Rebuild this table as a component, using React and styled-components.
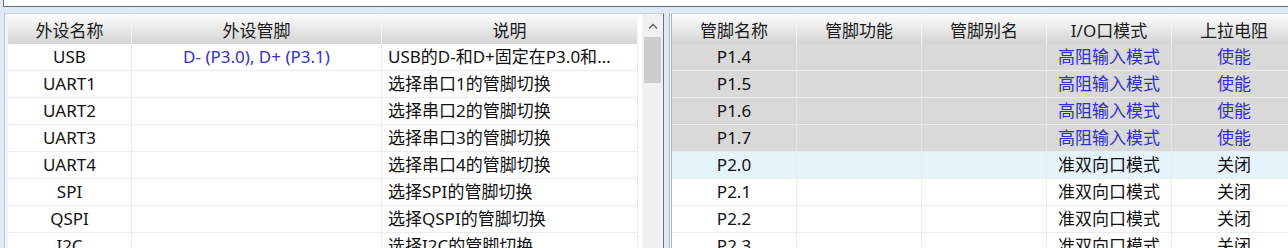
import styled, { createGlobalStyle } from "styled-components";

const GlobalStyle = createGlobalStyle`
  body {
    margin: 0;
    background: #dfe9f5;
    font-family: "Noto Sans", "Noto Sans CJK SC", sans-serif;
  }
`;

const peripherals = [
  { name: "USB", pins: "D- (P3.0), D+ (P3.1)", desc: "USB的D-和D+固定在P3.0和P3.1上，不可切换" },
  { name: "UART1", pins: "", desc: "选择串口1的管脚切换" },
  { name: "UART2", pins: "", desc: "选择串口2的管脚切换" },
  { name: "UART3", pins: "", desc: "选择串口3的管脚切换" },
  { name: "UART4", pins: "", desc: "选择串口4的管脚切换" },
  { name: "SPI", pins: "", desc: "选择SPI的管脚切换" },
  { name: "QSPI", pins: "", desc: "选择QSPI的管脚切换" },
  { name: "I2C", pins: "", desc: "选择I2C的管脚切换" },
];

const pins = [
  { name: "P1.4", mode: "高阻输入模式", pull: "使能", state: "locked" },
  { name: "P1.5", mode: "高阻输入模式", pull: "使能", state: "locked" },
  { name: "P1.6", mode: "高阻输入模式", pull: "使能", state: "locked" },
  { name: "P1.7", mode: "高阻输入模式", pull: "使能", state: "locked" },
  { name: "P2.0", mode: "准双向口模式", pull: "关闭", state: "hover" },
  { name: "P2.1", mode: "准双向口模式", pull: "关闭", state: "normal" },
  { name: "P2.2", mode: "准双向口模式", pull: "关闭", state: "normal" },
  { name: "P2.3", mode: "准双向口模式", pull: "关闭", state: "normal" },
];

function App() {
  return (
    <>
      <GlobalStyle />
      <Frame>
        <TopBox />
        <Panels>
          <LeftPanel>
            <Grid $cols="124px 250px 256px">
              <HeadCell>外设名称</HeadCell>
              <HeadCell>外设管脚</HeadCell>
              <HeadCell>说明</HeadCell>
              {peripherals.map((p) => (
                <Row key={p.name}>
                  <Cell>{p.name}</Cell>
                  <Cell $blue>{p.pins}</Cell>
                  <Cell $left>{p.desc}</Cell>
                </Row>
              ))}
            </Grid>
            <Gap />
            <ScrollBar>
              <ArrowUp>
                <svg width="10" height="6" viewBox="0 0 10 6">
                  <path d="M1 5.5 L5 1.5 L9 5.5" fill="none" stroke="#606060" strokeWidth="1.4" />
                </svg>
              </ArrowUp>
              <Thumb />
            </ScrollBar>
          </LeftPanel>
          <RightPanel>
            <Grid $cols="125px 125px 125px 125px 125px">
              <HeadCell>管脚名称</HeadCell>
              <HeadCell>管脚功能</HeadCell>
              <HeadCell>管脚别名</HeadCell>
              <HeadCell>I/O口模式</HeadCell>
              <HeadCell>上拉电阻</HeadCell>
              {pins.map((p) => (
                <Row key={p.name} $state={p.state}>
                  <Cell>{p.name}</Cell>
                  <Cell />
                  <Cell />
                  <Cell $blue={p.state === "locked"}>{p.mode}</Cell>
                  <Cell $blue={p.state === "locked"}>{p.pull}</Cell>
                </Row>
              ))}
            </Grid>
          </RightPanel>
        </Panels>
      </Frame>
    </>
  );
}

const Frame = styled.div`
  width: 1288px;
  height: 248px;
  overflow: hidden;
  background: #dfe9f5;
`;

const TopBox = styled.div`
  margin-left: 3px;
  height: 6px;
  background: #ffffff;
  border-left: 1px solid #6b6b6b;
  border-bottom: 1px solid #6b6b6b;
  margin-bottom: 6px;
`;

const Panels = styled.div`
  display: flex;
  padding-left: 4px;
  height: 235px;
`;

const LeftPanel = styled.div`
  box-sizing: border-box;
  display: flex;
  width: 660px;
  flex-shrink: 0;
  border-top: 1px solid #c7d6e6;
  border-left: 1px solid #afc5dc;
  border-right: 1px solid #707070;
  padding-left: 3px;
  background: #ffffff;
  box-shadow: inset 3px 0 0 #eef4fa;
`;

const RightPanel = styled.div`
  flex: 1;
  margin-left: 5px;
  border-top: 1px solid #c7d6e6;
  border-left: 3px double #9fb5cd;
  background: #ffffff;
  overflow: hidden;
`;

const Grid = styled.div`
  display: grid;
  grid-template-columns: ${(p) => p.$cols};
  grid-auto-rows: 27px;
  grid-template-rows: 30px;
  align-content: start;
  flex-shrink: 0;
`;

const HeadCell = styled.div`
  display: flex;
  align-items: center;
  justify-content: center;
  background: linear-gradient(#fdfdfd, #d4d4d4);
  border-right: 1px solid #f4f4f4;
  font-size: 17px;
  color: #1a1a1a;
  white-space: nowrap;
`;

const rowBg = {
  locked: "#d9d9d9",
  hover: "#e5f3fb",
  normal: "#ffffff",
};

const Row = styled.div`
  display: contents;
  & > div {
    background: ${(p) => rowBg[p.$state || "normal"]};
    border-bottom: 1px solid ${(p) => (p.$state === "locked" ? "#ececec" : "#e9edf1")};
    border-right: 1px solid ${(p) => (p.$state === "locked" ? "#e6e6e6" : "#ececec")};
  }
`;

const Cell = styled.div`
  box-sizing: border-box;
  height: 27px;
  line-height: 26px;
  text-align: ${(p) => (p.$left ? "left" : "center")};
  padding: ${(p) => (p.$left ? "0 18px 0 6px" : "0")};
  font-size: 17px;
  color: ${(p) => (p.$blue ? "#3030c8" : "#111111")};
  white-space: nowrap;
  overflow: hidden;
  text-overflow: ellipsis;
  min-width: 0;
`;

const Gap = styled.div`
  width: 4px;
  flex-shrink: 0;
`;

const ScrollBar = styled.div`
  width: 21px;
  flex-shrink: 0;
  background: #f0f0f0;
  display: flex;
  flex-direction: column;
  align-items: center;
`;

const ArrowUp = styled.div`
  height: 23px;
  display: flex;
  align-items: center;
  justify-content: center;
`;

const Thumb = styled.div`
  width: 17px;
  height: 46px;
  background: #cdcdcd;
`;

export default App;
